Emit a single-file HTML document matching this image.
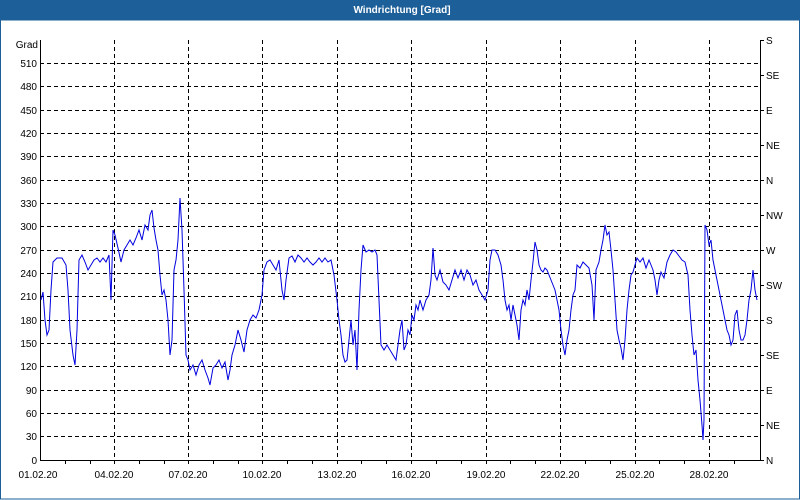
<!DOCTYPE html>
<html><head><style>
html,body{margin:0;padding:0;width:800px;height:500px;overflow:hidden;background:#fff}
</style></head><body>
<svg width="800" height="500" xmlns="http://www.w3.org/2000/svg" font-family="Liberation Sans, sans-serif" font-size="10">
<rect x="0" y="0" width="800" height="500" fill="#fff"/>
<rect x="0" y="0" width="800" height="20" fill="#1d5f99"/>
<rect x="0.5" y="20" width="799" height="479" fill="none" stroke="#1d5f99" stroke-width="1"/>
<text x="402" y="13" fill="#fff" font-weight="bold" text-anchor="middle" font-size="10">Windrichtung [Grad]</text>
<g stroke="#000" stroke-width="1" stroke-dasharray="4,3" shape-rendering="crispEdges">
<line x1="40" x2="760" y1="63.5" y2="63.5"/><line x1="40" x2="760" y1="86.5" y2="86.5"/><line x1="40" x2="760" y1="110.5" y2="110.5"/><line x1="40" x2="760" y1="133.5" y2="133.5"/><line x1="40" x2="760" y1="156.5" y2="156.5"/><line x1="40" x2="760" y1="180.5" y2="180.5"/><line x1="40" x2="760" y1="203.5" y2="203.5"/><line x1="40" x2="760" y1="226.5" y2="226.5"/><line x1="40" x2="760" y1="250.5" y2="250.5"/><line x1="40" x2="760" y1="273.5" y2="273.5"/><line x1="40" x2="760" y1="296.5" y2="296.5"/><line x1="40" x2="760" y1="320.5" y2="320.5"/><line x1="40" x2="760" y1="343.5" y2="343.5"/><line x1="40" x2="760" y1="366.5" y2="366.5"/><line x1="40" x2="760" y1="390.5" y2="390.5"/><line x1="40" x2="760" y1="413.5" y2="413.5"/><line x1="40" x2="760" y1="436.5" y2="436.5"/>
<line y1="40" y2="460" x1="114.5" x2="114.5"/><line y1="40" y2="460" x1="188.5" x2="188.5"/><line y1="40" y2="460" x1="262.5" x2="262.5"/><line y1="40" y2="460" x1="337.5" x2="337.5"/><line y1="40" y2="460" x1="411.5" x2="411.5"/><line y1="40" y2="460" x1="486.5" x2="486.5"/><line y1="40" y2="460" x1="560.5" x2="560.5"/><line y1="40" y2="460" x1="635.5" x2="635.5"/><line y1="40" y2="460" x1="709.5" x2="709.5"/>
</g>
<g stroke="#000" stroke-width="1" shape-rendering="crispEdges" fill="none">
<polyline points="40.5,40 40.5,460.5 760.5,460.5 760.5,40"/>
<path d="M760 40.5h4M760 75.5h4M760 110.5h4M760 145.5h4M760 180.5h4M760 215.5h4M760 250.5h4M760 285.5h4M760 320.5h4M760 355.5h4M760 390.5h4M760 425.5h4M760 460.5h4"/>
<path d="M65.5 460v4M90.5 460v4M114.5 460v4M139.5 460v4M164.5 460v4M188.5 460v4M213.5 460v4M238.5 460v4M262.5 460v4M287.5 460v4M312.5 460v4M337.5 460v4M361.5 460v4M386.5 460v4M411.5 460v4M436.5 460v4M461.5 460v4M486.5 460v4M510.5 460v4M535.5 460v4M560.5 460v4M585.5 460v4M610.5 460v4M635.5 460v4M659.5 460v4M684.5 460v4M709.5 460v4M734.5 460v4"/>
</g>
<g fill="#000" text-anchor="end">
<text x="38" y="48">Grad</text><text x="37" y="67">510</text><text x="37" y="90">480</text><text x="37" y="114">450</text><text x="37" y="137">420</text><text x="37" y="160">390</text><text x="37" y="184">360</text><text x="37" y="207">330</text><text x="37" y="230">300</text><text x="37" y="254">270</text><text x="37" y="277">240</text><text x="37" y="300">210</text><text x="37" y="324">180</text><text x="37" y="347">150</text><text x="37" y="370">120</text><text x="37" y="394">90</text><text x="37" y="417">60</text><text x="37" y="440">30</text><text x="37" y="464">0</text>
</g>
<g fill="#000">
<text x="766" y="44">S</text><text x="766" y="79">SE</text><text x="766" y="114">E</text><text x="766" y="149">NE</text><text x="766" y="184">N</text><text x="766" y="219">NW</text><text x="766" y="254">W</text><text x="766" y="289">SW</text><text x="766" y="324">S</text><text x="766" y="359">SE</text><text x="766" y="394">E</text><text x="766" y="429">NE</text><text x="766" y="464">N</text>
</g>
<g fill="#000" text-anchor="middle">
<text x="38" y="478">01.02.20</text><text x="114" y="478">04.02.20</text><text x="188" y="478">07.02.20</text><text x="262" y="478">10.02.20</text><text x="337" y="478">13.02.20</text><text x="411" y="478">16.02.20</text><text x="486" y="478">19.02.20</text><text x="560" y="478">22.02.20</text><text x="635" y="478">25.02.20</text><text x="709" y="478">28.02.20</text>
</g>
<polyline fill="none" stroke="#0000e0" stroke-width="1" points="41,300 43,292 45,320 47,335 49,330 51,290 53,262 57,258 62,258 66,265 68,290 70,330 73,355 75,365 77,330 79,260 82,255 85,262 88,270 91,265 94,260 97,258 100,262 103,258 106,262 109,255 111,300 113,230 115,235 118,248 121,262 124,250 127,245 130,240 133,245 136,238 139,230 142,240 145,225 148,230 150,215 152,210 154,228 156,240 158,250 160,275 162,295 164,290 166,300 168,320 170,355 172,340 174,270 176,260 178,240 180,198 182,230 184,290 186,355 188,360 190,370 193,365 196,375 199,365 202,360 205,370 208,378 210,385 213,368 216,365 219,360 222,368 225,362 228,380 230,370 232,355 235,345 238,330 241,340 244,352 247,330 250,320 253,315 256,318 259,310 262,295 264,270 267,262 270,260 273,265 276,270 279,260 282,290 284,300 286,280 289,258 292,256 295,262 298,255 301,258 304,262 307,258 310,262 313,265 316,262 319,258 322,262 325,258 328,262 331,260 334,275 337,300 339,320 341,335 343,355 345,362 347,360 349,340 351,320 353,345 355,330 357,370 359,310 361,270 363,245 366,252 369,250 372,252 375,250 377,255 379,300 381,345 384,350 387,345 390,350 393,355 396,360 398,345 400,330 402,320 404,350 406,345 408,330 410,335 412,315 414,320 416,305 418,310 420,300 423,310 426,300 429,295 431,280 433,248 435,275 437,280 440,270 443,282 446,285 449,290 452,280 455,270 458,278 461,270 464,280 467,270 470,275 473,285 476,280 479,290 482,295 485,300 488,290 490,260 492,250 495,250 498,255 501,265 503,280 505,300 507,310 509,305 511,320 513,305 515,315 517,325 519,340 521,310 523,300 525,305 527,290 529,300 531,280 533,262 535,242 537,250 539,265 541,270 543,272 545,268 547,270 549,275 551,280 553,285 555,290 557,300 559,310 561,330 563,345 565,355 567,340 569,330 571,310 573,295 575,290 577,265 580,268 583,262 586,265 589,268 592,285 594,320 596,270 599,262 601,250 603,240 605,225 607,235 609,232 611,250 613,270 615,300 617,330 619,340 621,348 623,360 625,340 627,310 629,290 631,275 633,272 635,265 637,258 640,262 643,258 646,268 649,260 651,265 653,270 655,280 657,295 659,280 661,272 664,278 667,262 670,255 673,250 676,252 679,256 682,260 685,262 688,275 690,310 692,335 694,355 696,350 698,380 700,400 702,425 703,440 704,420 705,225 707,230 709,245 711,240 713,260 715,270 717,280 719,290 721,300 723,310 725,320 727,330 729,335 731,345 733,340 735,315 737,310 739,330 741,340 743,340 745,335 747,320 749,300 751,290 753,270 755,290 757,300"/>
</svg>
</body></html>
